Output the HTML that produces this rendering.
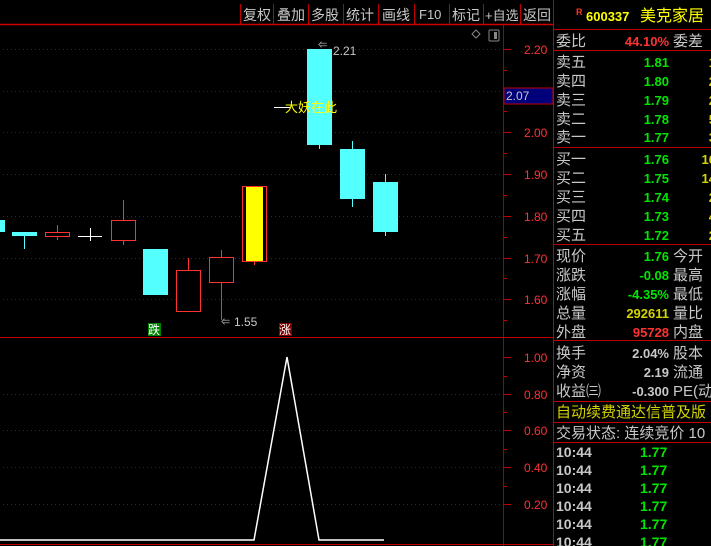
<!DOCTYPE html>
<html><head><meta charset="utf-8"><style>
html,body{margin:0;padding:0;background:#000;width:711px;height:546px;overflow:hidden}
svg{display:block}
text{font-family:"Liberation Sans","Noto Sans CJK SC",sans-serif}
.cn{font-family:"Noto Sans CJK SC","WenQuanYi Zen Hei",sans-serif;font-size:15px;fill:#c8c8c8}
.n{font-family:"Liberation Sans",sans-serif;font-weight:bold;font-size:13px}
.ax{font-family:"Liberation Sans",sans-serif;font-size:12px;fill:#ff3232}
</style></head><body>
<svg width="711" height="546" viewBox="0 0 711 546">
<rect width="711" height="546" fill="#000"/>
<!-- toolbar -->
<line x1="0" y1="24.5" x2="553" y2="24.5" stroke="#d00000" stroke-width="1.5"/>
<g stroke="#c00000" stroke-width="1">
<line x1="240.5" y1="4" x2="240.5" y2="24"/><line x1="273.5" y1="4" x2="273.5" y2="24"/>
<line x1="308.5" y1="4" x2="308.5" y2="24"/><line x1="343.5" y1="4" x2="343.5" y2="24"/>
<line x1="378.5" y1="4" x2="378.5" y2="24"/><line x1="414.5" y1="4" x2="414.5" y2="24"/>
<line x1="449.5" y1="4" x2="449.5" y2="24"/><line x1="483.5" y1="4" x2="483.5" y2="24"/>
<line x1="520.5" y1="4" x2="520.5" y2="24"/>
</g>
<g class="cn" style="font-size:14px">
<text x="243" y="20">复权</text><text x="277" y="20">叠加</text><text x="311" y="20">多股</text>
<text x="346" y="20">统计</text><text x="382" y="20">画线</text>
<text x="419" y="19" style="font-family:'Liberation Sans';font-size:13px">F10</text>
<text x="452" y="20">标记</text><text x="485" y="20" style="font-size:13px">+自选</text><text x="523" y="20">返回</text>
</g>
<!-- frames -->
<line x1="553.5" y1="0" x2="553.5" y2="546" stroke="#c00000"/>
<line x1="503.5" y1="25" x2="503.5" y2="546" stroke="#a00000"/>
<line x1="0" y1="337.5" x2="553" y2="337.5" stroke="#c00000"/>
<line x1="0" y1="544.5" x2="553" y2="544.5" stroke="#c00000"/>
<!-- dotted grid -->
<g stroke="#a00000" stroke-dasharray="1,3">
<line x1="3" y1="49.5" x2="503" y2="49.5"/><line x1="3" y1="91.5" x2="503" y2="91.5"/>
<line x1="3" y1="132.5" x2="503" y2="132.5"/><line x1="3" y1="174.5" x2="503" y2="174.5"/>
<line x1="3" y1="216.5" x2="503" y2="216.5"/><line x1="3" y1="258.5" x2="503" y2="258.5"/>
<line x1="3" y1="299.5" x2="503" y2="299.5"/>
<line x1="3" y1="394.5" x2="503" y2="394.5"/><line x1="3" y1="430.5" x2="503" y2="430.5"/>
<line x1="3" y1="467.5" x2="503" y2="467.5"/><line x1="3" y1="504.5" x2="503" y2="504.5"/>
</g>
<g stroke="#c00000">
<line x1="503" y1="49.5" x2="511" y2="49.5"/><line x1="503" y1="70.5" x2="507" y2="70.5"/>
<line x1="503" y1="91.5" x2="511" y2="91.5"/><line x1="503" y1="111.5" x2="507" y2="111.5"/>
<line x1="503" y1="132.5" x2="511" y2="132.5"/><line x1="503" y1="153.5" x2="507" y2="153.5"/>
<line x1="503" y1="174.5" x2="511" y2="174.5"/><line x1="503" y1="195.5" x2="507" y2="195.5"/>
<line x1="503" y1="216.5" x2="511" y2="216.5"/><line x1="503" y1="237.5" x2="507" y2="237.5"/>
<line x1="503" y1="258.5" x2="511" y2="258.5"/><line x1="503" y1="278.5" x2="507" y2="278.5"/>
<line x1="503" y1="299.5" x2="511" y2="299.5"/><line x1="503" y1="320.5" x2="507" y2="320.5"/>
<line x1="503" y1="357.5" x2="511" y2="357.5"/><line x1="503" y1="376.5" x2="507" y2="376.5"/>
<line x1="503" y1="394.5" x2="511" y2="394.5"/><line x1="503" y1="412.5" x2="507" y2="412.5"/>
<line x1="503" y1="430.5" x2="511" y2="430.5"/><line x1="503" y1="449.5" x2="507" y2="449.5"/>
<line x1="503" y1="467.5" x2="511" y2="467.5"/><line x1="503" y1="486.5" x2="507" y2="486.5"/>
<line x1="503" y1="504.5" x2="511" y2="504.5"/>
</g>
<g class="ax">
<text x="524" y="54">2.20</text><text x="524" y="137">2.00</text><text x="524" y="179">1.90</text>
<text x="524" y="221">1.80</text><text x="524" y="263">1.70</text><text x="524" y="304">1.60</text>
<text x="524" y="362">1.00</text><text x="524" y="399">0.80</text><text x="524" y="435">0.60</text>
<text x="524" y="472">0.40</text><text x="524" y="509">0.20</text>
</g>
<rect x="504" y="88" width="49" height="16" fill="#00007a" stroke="#c00000"/>
<text x="506" y="100" style="font-size:12px;fill:#c8c8c8">2.07</text>
<path d="M476 30 L480 34 L476 38 L472 34Z" fill="none" stroke="#888"/>
<rect x="489" y="30" width="10" height="11" rx="1" fill="none" stroke="#888"/>
<rect x="494" y="32" width="3" height="7" fill="#888"/>
<!-- candles -->
<rect x="0" y="220" width="5" height="12" fill="#54ffff"/>
<line x1="24.5" y1="232" x2="24.5" y2="249" stroke="#54ffff"/>
<rect x="12" y="232" width="25" height="4" fill="#54ffff"/>
<line x1="57.5" y1="225" x2="57.5" y2="240" stroke="#ff3232"/>
<rect x="45.5" y="232.5" width="24" height="4" fill="#000" stroke="#ff3232"/>
<line x1="78" y1="236.5" x2="102" y2="236.5" stroke="#fff"/>
<line x1="90.5" y1="228" x2="90.5" y2="241" stroke="#fff"/>
<line x1="123.5" y1="200" x2="123.5" y2="245" stroke="#ff3232"/>
<rect x="111.5" y="220.5" width="24" height="20" fill="#000" stroke="#ff3232"/>
<rect x="143" y="249" width="25" height="46" fill="#54ffff"/>
<line x1="188.5" y1="258" x2="188.5" y2="271" stroke="#ff3232"/>
<rect x="176.5" y="270.5" width="24" height="41" fill="#000" stroke="#ff3232"/>
<line x1="221.5" y1="250" x2="221.5" y2="320" stroke="#ff3232"/>
<rect x="209.5" y="257.5" width="24" height="25" fill="#000" stroke="#ff3232"/>
<line x1="254.5" y1="260" x2="254.5" y2="265" stroke="#ff3232"/>
<rect x="242.5" y="186.5" width="24" height="75" fill="#000" stroke="#ff3232"/>
<rect x="246" y="187" width="17" height="74" fill="#ffff00"/>
<line x1="319.5" y1="140" x2="319.5" y2="149" stroke="#54ffff"/>
<rect x="307" y="49" width="25" height="96" fill="#54ffff"/>
<line x1="352.5" y1="141" x2="352.5" y2="207" stroke="#54ffff"/>
<rect x="340" y="149" width="25" height="50" fill="#54ffff"/>
<line x1="385.5" y1="174" x2="385.5" y2="236" stroke="#54ffff"/>
<rect x="373" y="182" width="25" height="50" fill="#54ffff"/>
<!-- labels -->
<text x="318" y="48" style="font-size:9px;fill:#c8c8c8">⇐</text>
<text x="333" y="55" style="font-size:12px;fill:#c8c8c8">2.21</text>
<text x="221" y="325" style="font-size:9px;fill:#c8c8c8">⇐</text>
<text x="234" y="326" style="font-size:12px;fill:#c8c8c8">1.55</text>
<line x1="274" y1="107.5" x2="290" y2="107.5" stroke="#fff"/>
<text x="285" y="112" class="cn" style="fill:#ffff00;font-size:13px">大妖在此</text>
<rect x="148" y="323" width="13" height="13" fill="#008000"/>
<text x="148" y="334" class="cn" style="font-size:12px;fill:#fff">跌</text>
<rect x="279" y="323" width="13" height="13" fill="#800000"/>
<text x="279" y="334" class="cn" style="font-size:12px;fill:#fff">涨</text>
<polyline points="0,540 254,540 287,357 319,540 384,540" fill="none" stroke="#fff" stroke-width="1.5"/>
<!-- right panel -->
<g stroke="#c00000">
<line x1="554" y1="29.5" x2="711" y2="29.5"/><line x1="554" y1="50.5" x2="711" y2="50.5"/>
<line x1="554" y1="147.5" x2="711" y2="147.5"/><line x1="554" y1="244.5" x2="711" y2="244.5"/>
<line x1="554" y1="340.5" x2="711" y2="340.5"/><line x1="554" y1="401.5" x2="711" y2="401.5"/>
<line x1="554" y1="422.5" x2="711" y2="422.5"/><line x1="554" y1="442.5" x2="711" y2="442.5"/>
</g>
<text x="576" y="15" style="font-size:9px;font-weight:bold;fill:#ff3232">R</text>
<text x="586" y="21" style="font-size:13px;font-weight:bold;fill:#ffff00">600337</text>
<text x="640" y="21" class="cn" style="fill:#ffff00;font-size:16px">美克家居</text>
<g class="cn">
<text x="556" y="46">委比</text><text x="673" y="46">委差</text>
<text x="556" y="67">卖五</text><text x="556" y="86">卖四</text><text x="556" y="105">卖三</text><text x="556" y="124">卖二</text><text x="556" y="142">卖一</text>
<text x="556" y="164">买一</text><text x="556" y="183">买二</text><text x="556" y="202">买三</text><text x="556" y="221">买四</text><text x="556" y="240">买五</text>
<text x="556" y="261">现价</text><text x="673" y="261">今开</text>
<text x="556" y="280">涨跌</text><text x="673" y="280">最高</text>
<text x="556" y="299">涨幅</text><text x="673" y="299">最低</text>
<text x="556" y="318">总量</text><text x="673" y="318">量比</text>
<text x="556" y="337">外盘</text><text x="673" y="337">内盘</text>
<text x="556" y="358">换手</text><text x="673" y="358">股本</text>
<text x="556" y="377">净资</text><text x="673" y="377">流通</text>
<text x="556" y="396">收益㈢</text><text x="673" y="396">PE(动</text>
<text x="556" y="417" style="fill:#d4d400">自动续费通达信普及版</text>
<text x="556" y="438">交易状态: 连续竞价 10</text>
</g>
<g class="n" text-anchor="end">
<text x="669" y="46" fill="#ff3232">44.10%</text>
<g fill="#00e600">
<text x="669" y="67">1.81</text><text x="669" y="86">1.80</text><text x="669" y="105">1.79</text><text x="669" y="124">1.78</text><text x="669" y="142">1.77</text>
<text x="669" y="164">1.76</text><text x="669" y="183">1.75</text><text x="669" y="202">1.74</text><text x="669" y="221">1.73</text><text x="669" y="240">1.72</text>
<text x="669" y="261">1.76</text><text x="669" y="280">-0.08</text><text x="669" y="299">-4.35%</text>
</g>
<text x="669" y="318" fill="#d4d400">292611</text>
<text x="669" y="337" fill="#ff3232">95728</text>
<g fill="#c8c8c8"><text x="669" y="358">2.04%</text><text x="669" y="377">2.19</text><text x="669" y="396">-0.300</text></g>
<g fill="#d4d400">
<text x="716" y="67">1</text><text x="716" y="86">2</text><text x="716" y="105">2</text><text x="716" y="124">5</text><text x="716" y="142">3</text>
<text x="716" y="164">16</text><text x="716" y="183">14</text><text x="716" y="202">2</text><text x="716" y="221">4</text><text x="716" y="240">2</text>
</g>
</g>
<g class="n" style="font-size:14px">
<g fill="#c8c8c8"><text x="556" y="457">10:44</text><text x="556" y="475">10:44</text><text x="556" y="493">10:44</text><text x="556" y="511">10:44</text><text x="556" y="529">10:44</text><text x="556" y="547">10:44</text></g>
<g fill="#00e600"><text x="640" y="457">1.77</text><text x="640" y="475">1.77</text><text x="640" y="493">1.77</text><text x="640" y="511">1.77</text><text x="640" y="529">1.77</text><text x="640" y="547">1.77</text></g>
</g>
</svg>
</body></html>
